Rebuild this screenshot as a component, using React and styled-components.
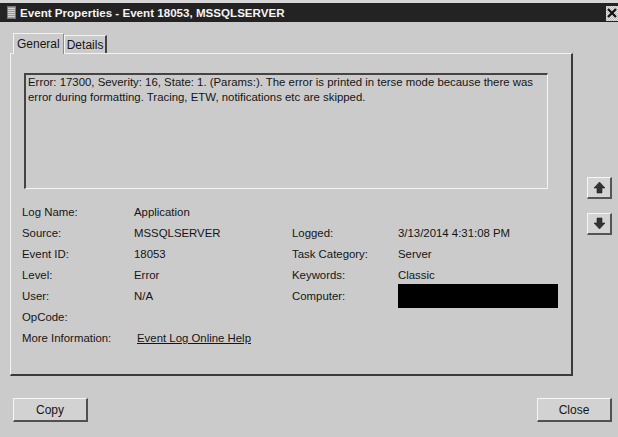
import React from "react";
import styled, { createGlobalStyle } from "styled-components";

const Global = createGlobalStyle`
  html, body { margin: 0; padding: 0; background: #cbcbcb; }
  body { font-family: "Liberation Sans", Arial, sans-serif; font-size: 12px; color: #151515; }
`;

const Window = styled.div`
  width: 618px;
  height: 437px;
  display: flex;
  flex-direction: column;
  background: #cbcbcb;
  overflow: hidden;
`;

const TopStrip = styled.div`
  height: 3px;
  background: #d6d6d6;
  flex: none;
`;

const TitleBar = styled.div`
  height: 19px;
  flex: none;
  background: #232323;
  display: flex;
  align-items: center;
  padding-left: 7px;
  gap: 4px;
`;

const AppIcon = styled.div`
  width: 9px;
  height: 13px;
  background: repeating-linear-gradient(0deg, #9a9a9a 0 1px, #d0d0d0 1px 2px);
  border: 1px solid #777;
  box-sizing: border-box;
`;

const Title = styled.div`
  color: #f4f4f4;
  font-weight: bold;
  font-size: 11.6px;
  flex: 1;
  white-space: nowrap;
`;

const CloseX = styled.div`
  width: 12px;
  height: 15px;
  margin-top: 1px;
  background: repeating-conic-gradient(#e6e6e6 0 25%, #b8b8b8 0 50%) 0 0 / 2px 2px;
  display: flex;
  align-items: center;
  justify-content: center;
`;

const Body = styled.div`
  flex: 1;
  display: flex;
  flex-direction: column;
  padding: 10px 0 0 10px;
`;

const TabRow = styled.div`
  display: flex;
  align-items: flex-end;
  height: 21px;
  margin-left: 3px;
  position: relative;
  z-index: 1;
`;

const Tab = styled.div`
  height: ${(p) => (p.$active ? "21px" : "18px")};
  padding: 0 ${(p) => (p.$active ? "3px" : "2px")};
  box-sizing: border-box;
  display: flex;
  align-items: center;
  background: #cbcbcb;
  border-top: 1px solid #f2f2f2;
  border-left: 1px solid #f2f2f2;
  border-right: ${(p) => (p.$active ? "1px solid #8a8a8a" : "2px solid #444")};
  margin-bottom: ${(p) => (p.$active ? "-1px" : "0")};
  font-size: 12px;
  color: #151515;
`;

const MainRow = styled.div`
  display: flex;
  gap: 14px;
`;

const Panel = styled.div`
  width: 563px;
  height: 323px;
  box-sizing: border-box;
  border-top: 1px solid #f2f2f2;
  border-left: 1px solid #f2f2f2;
  border-right: 2px solid #3a3a3a;
  border-bottom: 2px solid #3a3a3a;
  padding: 19px 0 0 13px;
  display: flex;
  flex-direction: column;
`;

const MessageBox = styled.div`
  width: 524px;
  height: 116px;
  box-sizing: border-box;
  border-top: 2px solid #444;
  border-left: 2px solid #444;
  border-right: 1px solid #f4f4f4;
  border-bottom: 1px solid #f4f4f4;
  padding: 0 2px;
  line-height: 15px;
  font-size: 11.4px;
  color: #151515;
`;

const Fields = styled.div`
  display: grid;
  grid-template-columns: 112px 158px 106px 170px;
  grid-auto-rows: 21px;
  margin-top: 12px;
  margin-left: -2px;
  align-items: center;
`;

const Cell = styled.div`
  white-space: nowrap;
  font-size: 11.4px;
  color: #151515;
`;

const LinkCell = styled(Cell)`
  text-decoration: underline;
  padding-left: 3px;
`;

const Redacted = styled.div`
  width: 160px;
  height: 24px;
  background: #000;
`;

const SideColumn = styled.div`
  display: flex;
  flex-direction: column;
  gap: 14px;
  padding-top: 124px;
`;

const ArrowButton = styled.div`
  width: 25px;
  height: 22px;
  box-sizing: border-box;
  background: #d4d4d4;
  border-top: 1px solid #f6f6f6;
  border-left: 1px solid #f6f6f6;
  border-right: 2px solid #555;
  border-bottom: 2px solid #555;
  display: flex;
  align-items: center;
  justify-content: center;
`;

const Footer = styled.div`
  display: flex;
  justify-content: space-between;
  padding: 22px 6px 0 3px;
`;

const Button = styled.div`
  width: 75px;
  height: 24px;
  box-sizing: border-box;
  background: #d2d2d2;
  border-top: 1px solid #f6f6f6;
  border-left: 1px solid #f6f6f6;
  border-right: 2px solid #505050;
  border-bottom: 2px solid #505050;
  display: flex;
  align-items: center;
  justify-content: center;
  font-size: 12px;
  color: #151515;
`;

const Arrow = ({ down }) => (
  <svg width="13" height="13" viewBox="0 0 13 13" style={down ? { transform: "rotate(180deg)" } : undefined}>
    <path d="M6.5 1 L12 7 L9 7 L9 12 L4 12 L4 7 L1 7 Z" fill="#333" stroke="#222" strokeWidth="0.6" />
  </svg>
);

const rows = [
  ["Log Name:", "Application", "", ""],
  ["Source:", "MSSQLSERVER", "Logged:", "3/13/2014 4:31:08 PM"],
  ["Event ID:", "18053", "Task Category:", "Server"],
  ["Level:", "Error", "Keywords:", "Classic"],
  ["User:", "N/A", "Computer:", null],
  ["OpCode:", "", "", ""],
];

export default function App() {
  return (
    <>
      <Global />
      <Window>
        <TopStrip />
        <TitleBar>
          <AppIcon />
          <Title>Event Properties - Event 18053, MSSQLSERVER</Title>
          <CloseX>
            <svg width="10" height="10" viewBox="0 0 10 10">
              <path d="M1 1 L9 9 M9 1 L1 9" stroke="#111" strokeWidth="2.2" />
            </svg>
          </CloseX>
        </TitleBar>
        <Body>
          <TabRow>
            <Tab $active>General</Tab>
            <Tab>Details</Tab>
          </TabRow>
          <MainRow>
            <Panel>
              <MessageBox>
                Error: 17300, Severity: 16, State: 1. (Params:). The error is printed in terse mode because there was
                error during formatting. Tracing, ETW, notifications etc are skipped.
              </MessageBox>
              <Fields>
                {rows.map((r, i) => (
                  <React.Fragment key={i}>
                    <Cell>{r[0]}</Cell>
                    <Cell>{r[1]}</Cell>
                    <Cell>{r[2]}</Cell>
                    {r[3] === null ? <Redacted /> : <Cell>{r[3]}</Cell>}
                  </React.Fragment>
                ))}
                <Cell>More Information:</Cell>
                <LinkCell>Event Log Online Help</LinkCell>
              </Fields>
            </Panel>
            <SideColumn>
              <ArrowButton><Arrow /></ArrowButton>
              <ArrowButton><Arrow down /></ArrowButton>
            </SideColumn>
          </MainRow>
          <Footer>
            <Button>Copy</Button>
            <Button>Close</Button>
          </Footer>
        </Body>
      </Window>
    </>
  );
}
